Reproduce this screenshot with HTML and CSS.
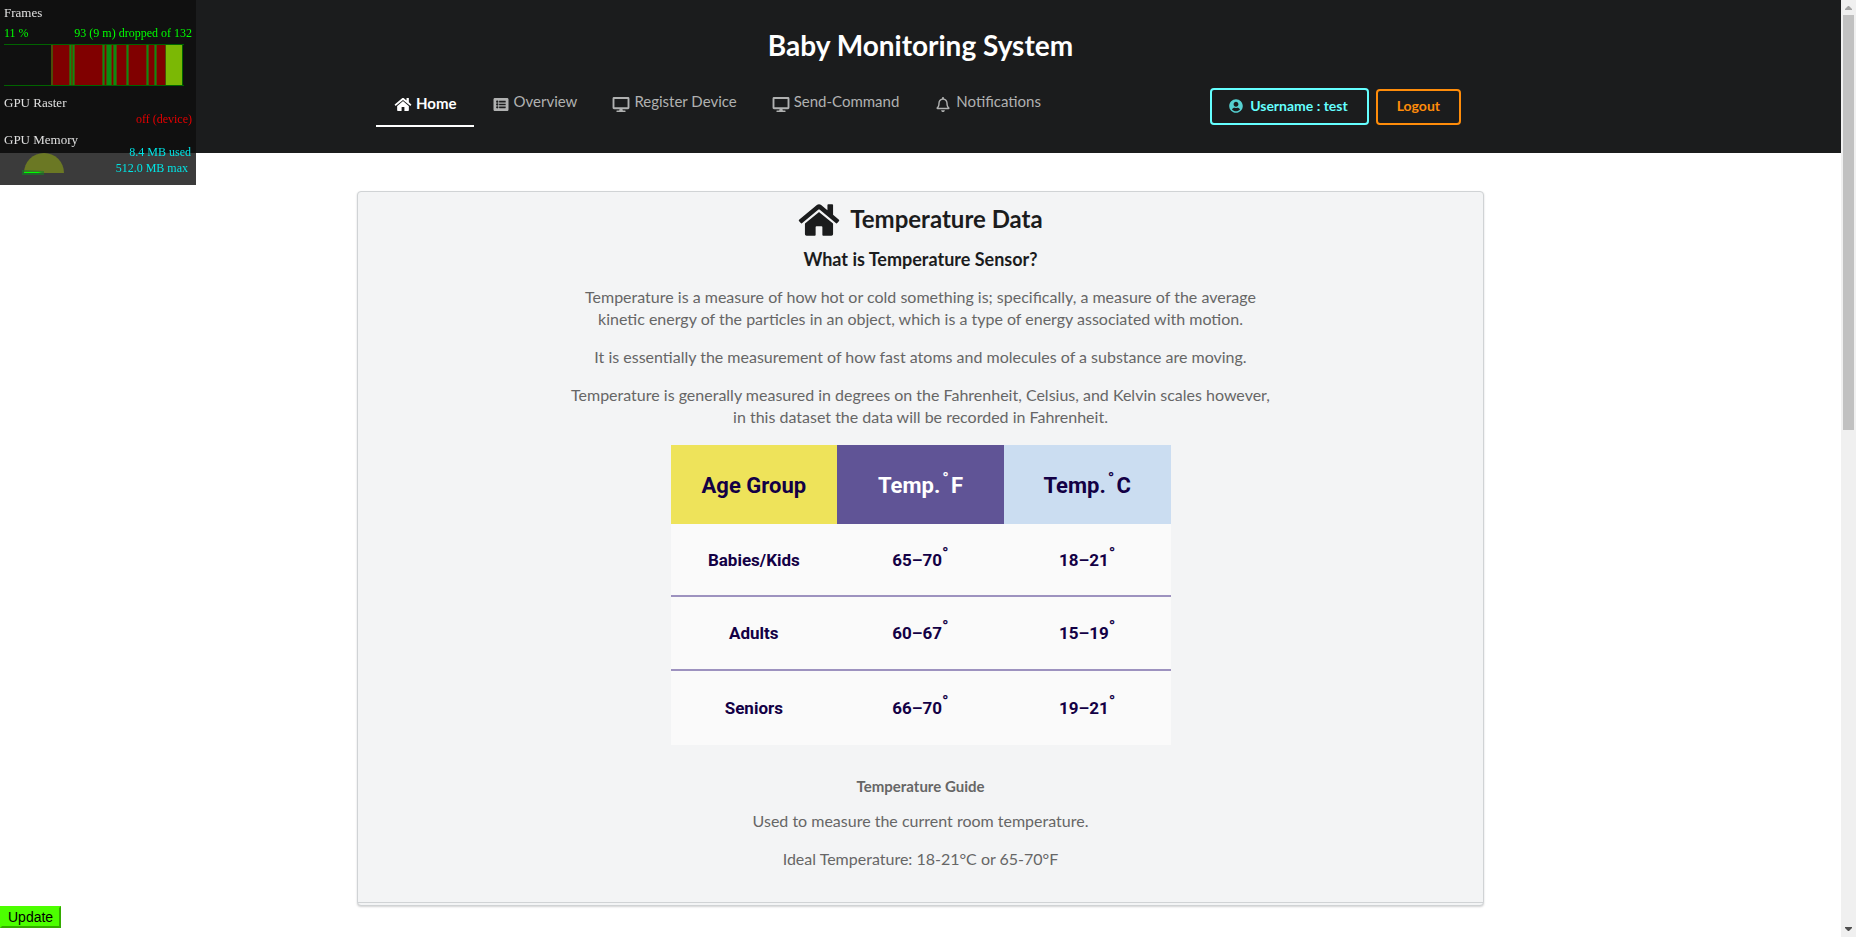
FILE: index.html
```html
<!DOCTYPE html>
<html lang="en">
<head>
<meta charset="utf-8">
<title>Baby Monitoring System</title>
<link rel="stylesheet" href="styles.css">
</head>
<body>
<svg class="sprite" aria-hidden="true">
  <symbol id="home" viewBox="0 0 576 512"><path d="M488 312.7V456c0 13.3-10.7 24-24 24H348c-6.600 0-12-5.400-12-12V356c0-6.600-5.400-12-12-12h-72c-6.600 0-12 5.400-12 12v112c0 6.600-5.400 12-12 12H112c-13.300 0-24-10.700-24-24V312.700c0-3.600 1.600-7 4.400-9.300l188-154.800c4.400-3.600 10.800-3.600 15.300 0l188 154.800c2.700 2.300 4.300 5.700 4.300 9.300zm83.600-60.900L488 182.900V44.400c0-6.600-5.400-12-12-12h-56c-6.600 0-12 5.400-12 12V117l-89.500-73.700c-17.700-14.600-43.300-14.600-61 0L4.400 251.800c-5.100 4.200-5.800 11.800-1.600 16.900l25.500 31c4.200 5.100 11.800 5.800 16.900 1.600l235.200-193.700c4.400-3.600 10.800-3.600 15.300 0l235.200 193.700c5.100 4.200 12.700 3.500 16.900-1.600l25.500-31c4.200-5.200 3.400-12.700-1.700-16.900z"/></symbol>
  <symbol id="list" viewBox="0 0 512 512"><path d="M464 480H48c-26.510 0-48-21.490-48-48V80c0-26.510 21.490-48 48-48h416c26.510 0 48 21.490 48 48v352c0 26.510-21.490 48-48 48zM128 120c-22.091 0-40 17.909-40 40s17.909 40 40 40 40-17.909 40-40-17.909-40-40-40zm0 96c-22.091 0-40 17.909-40 40s17.909 40 40 40 40-17.909 40-40-17.909-40-40-40zm0 96c-22.091 0-40 17.909-40 40s17.909 40 40 40 40-17.909 40-40-17.909-40-40-40zm288-136v-32c0-6.627-5.373-12-12-12H204c-6.627 0-12 5.373-12 12v32c0 6.627 5.373 12 12 12h200c6.627 0 12-5.373 12-12zm0 96v-32c0-6.627-5.373-12-12-12H204c-6.627 0-12 5.373-12 12v32c0 6.627 5.373 12 12 12h200c6.627 0 12-5.373 12-12zm0 96v-32c0-6.627-5.373-12-12-12H204c-6.627 0-12 5.373-12 12v32c0 6.627 5.373 12 12 12h200c6.627 0 12-5.373 12-12z"/></symbol>
  <symbol id="desktop" viewBox="0 0 576 512"><path d="M528 0H48C21.500 0 0 21.500 0 48v320c0 26.500 21.500 48 48 48h192l-16 48h-72c-13.300 0-24 10.700-24 24s10.700 24 24 24h272c13.300 0 24-10.700 24-24s-10.700-24-24-24h-72l-16-48h192c26.500 0 48-21.500 48-48V48c0-26.500-21.500-48-48-48zm-16 352H64V64h448v288z"/></symbol>
  <symbol id="bell" viewBox="0 0 448 512"><path d="M439.390 362.290c-19.320-20.760-55.470-51.990-55.470-154.290 0-77.700-54.480-139.900-127.940-155.160V32c0-17.670-14.320-32-31.980-32s-31.980 14.330-31.980 32v20.840C118.560 68.100 64.080 130.300 64.080 208c0 102.300-36.150 133.530-55.470 154.290-6 6.450-8.660 14.160-8.610 21.710.11 16.400 12.980 32 32.100 32h383.800c19.120 0 32-15.600 32.100-32 .05-7.550-2.610-15.270-8.610-21.710zM67.530 368c21.220-27.970 44.420-74.330 44.530-159.420 0-.2-.06-.38-.06-.58 0-61.860 50.140-112 112-112s112 50.140 112 112c0 .2-.06.38-.06.58.11 85.100 23.310 131.460 44.530 159.420H67.530zM224 512c35.320 0 63.970-28.650 63.970-64H160.030c0 35.350 28.650 64 63.970 64z"/></symbol>
  <symbol id="user" viewBox="0 0 496 512"><path d="M248 8C111 8 0 119 0 256s111 248 248 248 248-111 248-248S385 8 248 8zm0 96c48.600 0 88 39.400 88 88s-39.400 88-88 88-88-39.400-88-88 39.400-88 88-88zm0 344c-58.700 0-111.300-26.600-146.500-68.200 18.800-35.400 55.600-59.800 98.500-59.800 2.400 0 4.800.4 7.100 1.100 13 4.200 26.600 6.900 40.900 6.900 14.300 0 28-2.700 40.900-6.900 2.300-.7 4.700-1.100 7.100-1.100 42.900 0 79.700 24.400 98.500 59.800C359.300 421.400 306.700 448 248 448z"/></symbol>
</svg>

<div class="page">
  <header class="masthead">
    <h1 class="masthead-title">Baby Monitoring System</h1>
    <nav class="menu" aria-label="Main">
      <a class="menu-item active" href="#home"><svg class="icon"><use href="#home"/></svg>Home</a>
      <a class="menu-item" href="#overview"><svg class="icon"><use href="#list"/></svg>Overview</a>
      <a class="menu-item" href="#register"><svg class="icon"><use href="#desktop"/></svg>Register Device</a>
      <a class="menu-item" href="#send"><svg class="icon"><use href="#desktop"/></svg>Send-Command</a>
      <a class="menu-item" href="#notifications"><svg class="icon"><use href="#bell"/></svg>Notifications</a>
      <div class="menu-actions">
        <button class="btn btn-user" type="button"><svg class="btn-icon"><use href="#user"/></svg>Username : test</button>
        <button class="btn btn-logout" type="button">Logout</button>
      </div>
    </nav>
  </header>

  <main class="card">
    <h2 class="card-title"><svg class="card-icon"><use href="#home"/></svg>Temperature Data</h2>
    <h3 class="card-subtitle">What is Temperature Sensor?</h3>
    <p>Temperature is a measure of how hot or cold something is; specifically, a measure of the average<br>kinetic energy of the particles in an object, which is a type of energy associated with motion.</p>
    <p>It is essentially the measurement of how fast atoms and molecules of a substance are moving.</p>
    <p>Temperature is generally measured in degrees on the Fahrenheit, Celsius, and Kelvin scales however,<br>in this dataset the data will be recorded in Fahrenheit.</p>
    <table class="temps">
      <thead>
        <tr><th class="age" scope="col">Age Group</th><th class="fahrenheit" scope="col">Temp.<sup>°</sup>F</th><th class="celsius" scope="col">Temp.<sup>°</sup>C</th></tr>
      </thead>
      <tbody>
        <tr><td>Babies/Kids</td><td>65–70<sup>°</sup></td><td>18–21<sup>°</sup></td></tr>
        <tr><td>Adults</td><td>60–67<sup>°</sup></td><td>15–19<sup>°</sup></td></tr>
        <tr><td>Seniors</td><td>66–70<sup>°</sup></td><td>19–21<sup>°</sup></td></tr>
      </tbody>
    </table>
    <h4 class="guide-title">Temperature Guide</h4>
    <p>Used to measure the current room temperature.</p>
    <p>Ideal Temperature: 18-21°C or 65-70°F</p>
  </main>
</div>

<div class="scrollbar" aria-hidden="true">
  <svg class="arrow arrow-up" viewBox="0 0 7 4"><path d="M0 4V3L3 0h1l3 3v1z"/></svg>
  <div class="thumb"></div>
  <svg class="arrow arrow-down" viewBox="0 0 7 4"><path d="M0 0v1l3 3h1l3-3V0z"/></svg>
</div>

<aside class="stats" aria-label="Rendering statistics">
  <div class="stats-label">Frames</div>
  <div class="stats-row"><span>11 %</span><span>93 (9 m) dropped of 132</span></div>
  <svg class="chart" viewBox="0 0 180 42" shape-rendering="crispEdges">
    <path fill="#800000" d="M48 1h114v40H48z"/>
    <path fill="#4d4d08" d="M47 1h2v40h-2zM65 1h6v40h-6zM98 1h3v40h-3zM102 1h6v40h-6zM109 1h4v40h-4zM122 1h3v40h-3zM142 1h3v40h-3zM150 1h3v40h-3zM161 1h2v40h-2z"/>
    <path fill="#0a8c12" d="M66 1h1v40h-1zM69 1h1v40h-1zM99 1h1v40h-1zM103 1h4v40h-4zM110 1h2v40h-2zM123 1h1v40h-1zM143 1h1v40h-1zM151 1h1v40h-1z"/>
    <path fill="#7bb805" d="M162 1h16v40h-16z"/>
    <path fill="#006400" d="M0 0h180v1H0zM0 41h180v1H0zM178 1h1v40h-1z"/>
  </svg>
  <div class="stats-label">GPU Raster</div>
  <div class="stats-off">off (device)</div>
  <div class="stats-label">GPU Memory</div>
  <div class="memory">
    <svg class="gauge" viewBox="0 0 42 22"><path fill="#6b7824" d="M2 20a20 20 0 0 1 40 0z"/><path fill="#148225" fill-opacity=".6" d="M0 17h4l18 1v4H0z"/><path fill="#00ff00" d="M2 19h14l4 1H2z"/></svg>
    <div class="memory-text"><div>8.4 MB used</div><div class="memory-max">512.0 MB max</div></div>
  </div>
</aside>

<button class="update" type="button">Update</button>
</body>
</html>
```

FILE: styles.css
```css
* { box-sizing: border-box; }
body {
  margin: 0;
  background: #fff;
  color: #666;
  font: 16px/22px Lato, "Liberation Sans", sans-serif;
}
.sprite { display: none; }
svg { fill: currentColor; }
.page { margin-right: 15px; }

.masthead {
  padding: 27px 0 26px;
  background: #1b1c1d;
  color: #fff;
}
.masthead-title {
  margin: 0 0 24px;
  font-size: 28px;
  line-height: 36px;
  text-align: center;
}
.menu {
  display: flex;
  max-width: 1127px;
  margin: 0 auto;
  padding: 0 23px 0 19px;
  align-items: flex-start;
}
.menu-item {
  display: flex;
  gap: 4px;
  height: 40px;
  padding: 3px 17px 0 18px;
  color: #b0b1b1;
  font-size: 15px;
  text-decoration: none;
}
.menu-item.active {
  padding-top: 5px;
  border-bottom: 2px solid #fff;
  color: #fff;
  font-weight: 700;
}
.icon {
  width: 18px;
  height: 15px;
  margin-top: 7px;
}
.active .icon { margin-top: 5px; }
.menu-actions {
  display: flex;
  align-items: flex-end;
  gap: 7px;
  margin: 1px 0 0 auto;
}
.btn {
  display: flex;
  align-items: center;
  gap: 7px;
  height: 36px;
  padding: 0 19px 2px;
  border: 2px solid;
  border-radius: 4px;
  background: transparent;
  font: 700 14px/20px Lato, sans-serif;
}
.btn-user {
  height: 37px;
  padding-left: 17px;
  color: #65ffff;
}
.btn-logout { color: #ff8c0a; }
.btn-icon {
  width: 14px;
  height: 14px;
  opacity: .8;
}

.card {
  max-width: 1127px;
  margin: 38px auto 32px;
  padding: 10px 14px 19px;
  border: 1px solid #d0d3d5;
  border-radius: 4px;
  background: linear-gradient(#d0d3d5, #d0d3d5) 0 calc(100% - 2px) / 100% 1px no-repeat #f3f4f5;
  box-shadow: 0 1px 2px rgba(34, 36, 38, .2);
  text-align: center;
}
.card p { margin: 0 0 16px; }
.card-title {
  display: flex;
  justify-content: center;
  align-items: flex-start;
  gap: 10px;
  margin: 0 0 9px;
  color: #1b1c1d;
  font-size: 24px;
  line-height: 34px;
}
.card-icon {
  width: 42px;
  height: 36px;
}
.card-subtitle {
  margin: 0 0 15px;
  color: #1b1c1d;
  font-size: 18px;
  line-height: 24px;
}
.card .temps {
  width: 500px;
  max-width: 100%;
  margin: 17px auto 30px;
  border-spacing: 0;
  table-layout: fixed;
  background: #fafafa;
  color: #130045;
  font: 700 17px/24px Roboto, sans-serif;
}
.temps th {
  height: 79px;
  padding: 2px 0 0;
  font-size: 22px;
}
.temps td {
  height: 71px;
  padding: 0;
}
.temps tr + tr td {
  height: 74px;
  border-top: 2px solid #9d92bf;
}
.temps tr + tr + tr td { height: 76px; }
.temps sup {
  margin: 0 2px;
  font-size: 17px;
  line-height: 0;
}
.temps td sup { margin: 0; }
.age { background: #eee35a; }
.fahrenheit { background: #605496; color: #fff; }
.celsius { background: #cbddf1; }
.guide-title {
  margin: 0 0 13px;
  font-size: 15px;
  line-height: 22px;
}

.scrollbar {
  position: fixed;
  top: 0;
  right: 0;
  bottom: 0;
  display: flex;
  flex-direction: column;
  align-items: center;
  width: 15px;
  background: #f0f0f0;
}
.arrow {
  width: 7px;
  height: 4px;
}
.arrow-up { margin: 6px 0 5px; fill: #a3a3a3; }
.arrow-down { margin: auto 0 6px; fill: #505050; }
.thumb {
  width: 11px;
  height: 44.3%;
  background: #c1c1c1;
}

.stats {
  position: fixed;
  top: 0;
  left: 0;
  width: 196px;
  height: 185px;
  padding: 5px 4px 0;
  background: rgba(14, 14, 14, .81);
  font: 12px/16px "Liberation Serif", serif;
}
.stats-label {
  color: #e0e0e0;
  font-size: 13px;
}
.stats-row {
  display: flex;
  justify-content: space-between;
  margin: 4px 0 3px;
  color: #00ff00;
}
.chart {
  display: block;
  width: 180px;
  height: 42px;
  margin-bottom: 9px;
}
.stats-off {
  margin-bottom: 5px;
  color: #e60000;
  text-align: right;
}
.memory {
  display: flex;
  justify-content: space-between;
  margin-top: -4px;
  padding: 0 1px 0 18px;
  color: #00e5e5;
  text-align: right;
}
.gauge {
  width: 42px;
  height: 22px;
  margin-top: 9px;
}
.memory-max { padding-right: 3px; }

.update {
  position: fixed;
  left: 0;
  bottom: 9px;
  height: 22px;
  padding: 0 6px;
  border: 2px outset #4cff00;
  border-left-color: #4cff00;
  border-top-color: #4cff00;
  background: #4cff00;
  color: #000;
  font: 14px/18px "Liberation Sans", Arial, sans-serif;
}
```
